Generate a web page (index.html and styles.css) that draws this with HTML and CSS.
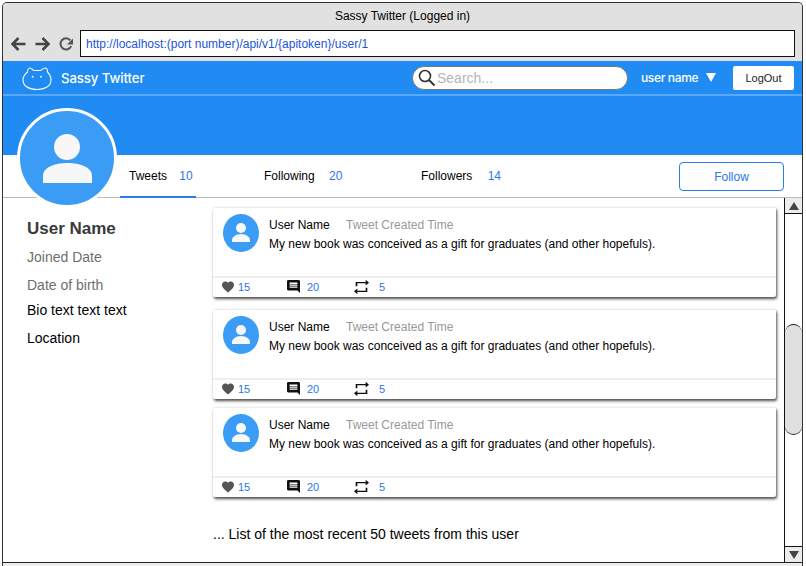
FILE: index.html
```html
<!DOCTYPE html>
<html>
<head>
<meta charset="utf-8">
<meta content="width=device-width, initial-scale=1.0" name="viewport">
<title>Sassy Twitter (Logged in)</title>
<link rel="stylesheet" href="styles.css">
</head>
<body>
<div class="window">
  <div class="chrome">
    <div class="chrome-title">Sassy Twitter (Logged in)</div>
    <div class="chrome-bar">
      <svg class="chrome-icon" width="17" height="16" viewBox="0 0 17 16"><path d="M15.5 8H2.5M8.5 2L2.5 8l6 6" fill="none" stroke="#444" stroke-width="2.6"/></svg>
      <svg class="chrome-icon" width="17" height="16" viewBox="0 0 17 16"><path d="M1.5 8h13M8.5 2l6 6-6 6" fill="none" stroke="#444" stroke-width="2.6"/></svg>
      <svg class="chrome-icon" width="16" height="16" viewBox="0 0 16 16"><path d="M13.2 10.2A5.6 5.6 0 1 1 12.4 4.4" fill="none" stroke="#555" stroke-width="2"/><path d="M15 2.5v6H9z" fill="#555"/></svg>
      <div class="url">http://localhost:(port number)/api/v1/{apitoken}/user/1</div>
    </div>
  </div>

  <div class="nav">
    <svg class="logo" width="30" height="26" viewBox="0 0 30 26"><path d="M5.500 6C5.500 4 6.500 2 8 2C9.500 2 11 4.500 12 4.500h6C19.500 4.500 21 2 23 2C24.500 2 25.500 4 25.500 6C28 8.500 29 11.500 29 14C29 20 23 23.500 15 23.500S1 20 1 14C1 11 3 8 5.500 6z" fill="none" stroke="#fff" stroke-width="1.100"/><circle cx="10.700" cy="10.700" r=".9" fill="#fff"/><circle cx="19" cy="10.700" r=".9" fill="#fff"/></svg>
    <span class="brand">Sassy Twitter</span>
    <div class="search">
      <svg width="18" height="18" viewBox="0 0 18 18"><circle cx="7" cy="7" r="5.500" fill="none" stroke="#333" stroke-width="1.600"/><path d="M11 11l5.500 5.500" stroke="#333" stroke-width="2"/></svg>
      <span>Search...</span>
    </div>
    <span class="user">user name</span>
    <span class="caret"></span>
    <a class="logout">LogOut</a>
  </div>
  <div class="banner"></div>

  <div class="tabs">
    <div class="avatar-big">
      <svg width="94" height="94" viewBox="0 0 94 94"><circle cx="47" cy="36" r="13" fill="#f7f7f7"/><path d="M23 72V65c0-9 12-13 24.500-13S72 56 72 65v7z" fill="#f7f7f7"/></svg>
    </div>
    <a class="tab tab-first tab-on">Tweets <b>10</b></a>
    <a class="tab tab-second">Following <b>20</b></a>
    <a class="tab tab-third">Followers <b>14</b></a>
    <a class="follow">Follow</a>
  </div>

  <div class="main">
    <div class="side">
      <h1>User Name</h1>
      <p class="muted">Joined Date</p>
      <p class="muted dob">Date of birth</p>
      <p class="bio">Bio text text text</p>
      <p class="loc">Location</p>
    </div>

    <div class="feed">
      <div class="tweet">
        <div class="tweet-body">
          <svg class="tweet-pic" width="36" height="38" viewBox="0 0 36 38"><ellipse cx="18" cy="19" rx="18" ry="19" fill="#3b9cf6"/><circle cx="18" cy="14" r="5" fill="#f7f7f7"/><path d="M9 28v-2c0-3 4-6 9-6s9 3 9 6v2z" fill="#f7f7f7"/></svg>
          <div>
            <div class="tweet-head">User Name <span>Tweet Created Time</span></div>
            <div class="tweet-text">My new book was conceived as a gift for graduates (and other hopefuls).</div>
          </div>
        </div>
        <div class="tweet-foot">
          <span class="stat stat-like"><svg width="12" height="12" viewBox="2 2 20 20"><path d="M12 21.350l-1.450-1.320C5.400 15.360 2 12.280 2 8.500 2 5.420 4.420 3 7.500 3c1.740 0 3.410.81 4.500 2.090C13.090 3.810 14.760 3 16.500 3 19.580 3 22 5.420 22 8.500c0 3.780-3.400 6.860-8.550 11.540L12 21.350z" fill="#555"/></svg>15</span>
          <span class="stat stat-reply"><svg width="13" height="13" viewBox="2 2 20 20"><path d="M21.990 4c0-1.100-.89-2-1.990-2H4c-1.100 0-2 .9-2 2v12c0 1.100.9 2 2 2h14l4 4-.01-18zM18 14H6v-2h12v2zm0-3H6V9h12v2zm0-3H6V6h12v2z" fill="#111"/></svg>20</span>
          <span class="stat"><svg width="15" height="16" viewBox="3 1 18 22" preserveAspectRatio="none"><path d="M7 7h10v3l4-4-4-4v3H5v6h2V7zm10 10H7v-3l-4 4 4 4v-3h12v-6h-2v4z" fill="#111"/></svg>5</span>
        </div>
      </div>

      <div class="tweet tweet-tight">
        <div class="tweet-body">
          <svg class="tweet-pic" width="36" height="38" viewBox="0 0 36 38"><ellipse cx="18" cy="19" rx="18" ry="19" fill="#3b9cf6"/><circle cx="18" cy="14" r="5" fill="#f7f7f7"/><path d="M9 28v-2c0-3 4-6 9-6s9 3 9 6v2z" fill="#f7f7f7"/></svg>
          <div>
            <div class="tweet-head">User Name <span>Tweet Created Time</span></div>
            <div class="tweet-text">My new book was conceived as a gift for graduates (and other hopefuls).</div>
          </div>
        </div>
        <div class="tweet-foot">
          <span class="stat stat-like"><svg width="12" height="12" viewBox="2 2 20 20"><path d="M12 21.350l-1.450-1.320C5.400 15.360 2 12.280 2 8.500 2 5.420 4.420 3 7.500 3c1.740 0 3.410.81 4.500 2.090C13.090 3.810 14.760 3 16.500 3 19.580 3 22 5.420 22 8.500c0 3.780-3.400 6.860-8.550 11.540L12 21.350z" fill="#555"/></svg>15</span>
          <span class="stat stat-reply"><svg width="13" height="13" viewBox="2 2 20 20"><path d="M21.990 4c0-1.100-.89-2-1.990-2H4c-1.100 0-2 .9-2 2v12c0 1.100.9 2 2 2h14l4 4-.01-18zM18 14H6v-2h12v2zm0-3H6V9h12v2zm0-3H6V6h12v2z" fill="#111"/></svg>20</span>
          <span class="stat"><svg width="15" height="16" viewBox="3 1 18 22" preserveAspectRatio="none"><path d="M7 7h10v3l4-4-4-4v3H5v6h2V7zm10 10H7v-3l-4 4 4 4v-3h12v-6h-2v4z" fill="#111"/></svg>5</span>
        </div>
      </div>

      <div class="tweet">
        <div class="tweet-body">
          <svg class="tweet-pic" width="36" height="38" viewBox="0 0 36 38"><ellipse cx="18" cy="19" rx="18" ry="19" fill="#3b9cf6"/><circle cx="18" cy="14" r="5" fill="#f7f7f7"/><path d="M9 28v-2c0-3 4-6 9-6s9 3 9 6v2z" fill="#f7f7f7"/></svg>
          <div>
            <div class="tweet-head">User Name <span>Tweet Created Time</span></div>
            <div class="tweet-text">My new book was conceived as a gift for graduates (and other hopefuls).</div>
          </div>
        </div>
        <div class="tweet-foot">
          <span class="stat stat-like"><svg width="12" height="12" viewBox="2 2 20 20"><path d="M12 21.350l-1.450-1.320C5.400 15.360 2 12.280 2 8.500 2 5.420 4.420 3 7.500 3c1.740 0 3.410.81 4.500 2.090C13.090 3.810 14.760 3 16.500 3 19.580 3 22 5.420 22 8.500c0 3.780-3.400 6.860-8.550 11.540L12 21.350z" fill="#555"/></svg>15</span>
          <span class="stat stat-reply"><svg width="13" height="13" viewBox="2 2 20 20"><path d="M21.990 4c0-1.100-.89-2-1.990-2H4c-1.100 0-2 .9-2 2v12c0 1.100.9 2 2 2h14l4 4-.01-18zM18 14H6v-2h12v2zm0-3H6V9h12v2zm0-3H6V6h12v2z" fill="#111"/></svg>20</span>
          <span class="stat"><svg width="15" height="16" viewBox="3 1 18 22" preserveAspectRatio="none"><path d="M7 7h10v3l4-4-4-4v3H5v6h2V7zm10 10H7v-3l-4 4 4 4v-3h12v-6h-2v4z" fill="#111"/></svg>5</span>
        </div>
      </div>

      <p class="more">... List of the most recent 50 tweets from this user</p>
    </div>

    <div class="scroll">
      <div class="scroll-btn"><i class="arrow-up"></i></div>
      <div class="scroll-track"><div class="scroll-thumb"></div></div>
      <div class="scroll-btn scroll-btn-end"><i class="arrow-down"></i></div>
    </div>
  </div>
</div>
</body>
</html>
```

FILE: styles.css
```css
* { box-sizing: border-box; }
html, body { height: 100%; }
body { margin: 0; background: #fff; font-family: "Liberation Sans", Arial, sans-serif; color: #000; overflow: hidden; }
p, h1 { margin: 0; }

.window { width: 801px; height: 564px; margin: 2px 0 0 2px; border: 1px solid #333; border-bottom: none; border-radius: 5px 5px 0 0; display: flex; flex-direction: column; overflow: hidden; background: #ececec; }

/* browser chrome */
.chrome { height: 58px; background: #e1e1e1; flex: none; }
.chrome-title { height: 27px; padding-top: 6px; text-align: center; font-size: 12px; line-height: 15px; }
.chrome-bar { display: flex; align-items: center; padding-left: 7px; height: 27px; }
.chrome-icon { margin-right: 7px; flex: none; }
.url { margin-left: -1px; width: 715px; height: 27px; background: #fff; border: 1px solid #111; font-size: 12px; line-height: 27px; padding-left: 5px; color: #1a55d8; }

/* nav + banner */
.nav { height: 33px; background: #1f8bf3; display: flex; align-items: center; flex: none; color: #fff; padding-left: 19px; }
.logo { flex: none; margin-top: 3px; }
.brand { margin-left: 9px; font-size: 13.2px; font-family: Inter, "Liberation Sans", sans-serif; font-weight: 500; width: 351px; letter-spacing: -.1px; }
.search { width: 216px; height: 24px; border: 1px solid #777; border-radius: 12px; background: #fff; display: flex; align-items: center; padding-left: 5px; font-size: 14px; color: #b5b5b5; }
.search svg { flex: none; margin-right: 1px; }
.user { margin-left: 13px; font-size: 12px; width: 65px; font-family: Inter, "Liberation Sans", sans-serif; font-weight: 500; letter-spacing: -.35px; }
.caret { width: 0; height: 0; border-left: 5px solid transparent; border-right: 5px solid transparent; border-top: 9px solid #fff; }
.logout { margin-left: 17px; width: 61px; height: 24px; background: #fff; border-radius: 2px; color: #222; font-size: 11px; line-height: 24px; text-align: center; }
.banner { height: 61px; background: #1f8bf3; border-top: 2px solid #5aa9f6; flex: none; }

/* tabs */
.tabs { position: relative; height: 43px; background: #fff; border-bottom: 1px solid #bbb; display: flex; flex: none; font-size: 12px; }
.avatar-big { position: absolute; left: 14px; top: -47px; width: 100px; height: 100px; border: 3px solid #fff; border-radius: 50%; background: #3b9cf6; }
.avatar-big svg { display: block; }
.tab { height: 43px; line-height: 43px; padding-left: 9px; }
.tab b { font-weight: normal; color: #2b76e8; margin-left: 11px; }
.tab-first { margin-left: 117px; width: 76px; padding-left: 9px; }
.tab-first b { margin-left: 9px; }
.tab-second { margin-left: 59px; width: 157px; padding-left: 9px; }
.tab-third { width: 267px; padding-left: 9px; }
.tab-third b { margin-left: 12px; }
.tab-on { border-bottom: 2px solid #2b7de9; }
.follow { margin-top: 7px; width: 105px; height: 29px; border: 1px solid #2b7de9; border-radius: 4px; color: #2b76e8; line-height: 29px; text-align: center; }

/* main area */
.main { flex: 1; min-height: 0; height: 364px; background: #fff; display: flex; border-bottom: 1px solid #222; margin-bottom: 3px; }
.side { width: 210px; flex: none; padding: 20px 0 0 24px; font-size: 14px; }
.side h1 { font-size: 17px; line-height: 22px; color: #3a3a3a; }
.muted { color: #6e6e6e; }
.side p { line-height: 16px; }
.side .muted { margin-top: 9px; }
.side .dob { margin-top: 12px; }
.side .bio { margin-top: 9px; }
.side .loc { margin-top: 12px; }

.feed { width: 563px; flex: none; padding-top: 9px; }
.tweet { height: 90px; margin-bottom: 12px; background: #fff; border-top: 1px solid #eee; box-shadow: 1px 2px 3px rgba(0,0,0,.7); border-radius: 2px; display: flex; flex-direction: column; font-size: 12px; }
.tweet-tight { margin-bottom: 8px; }
.tweet-body { flex: 1; display: flex; padding: 6px 0 0 10px; }
.tweet-pic { flex: none; margin-right: 10px; }
.tweet-head { line-height: 14px; margin-top: 4px; }
.tweet-head span { color: #999; margin-left: 13px; }
.tweet-text { line-height: 14px; margin-top: 5px; }
.tweet-foot { height: 21px; border-top: 2px solid #eee; display: flex; align-items: center; padding: 0 0 2px 9px; font-size: 11px; color: #2b76e8; }
.stat { display: flex; align-items: center; gap: 4px; }
.stat-like { width: 65px; }
.stat-reply { width: 67px; gap: 7px; }
.stat:last-child { gap: 10px; }
.more { margin-top: 29px; font-size: 14px; line-height: 16px; }

/* scrollbar */
.scroll { margin-left: 8px; width: 18px; border-left: 1px solid #111; display: flex; flex-direction: column; }
.scroll-btn { height: 16px; border-bottom: 1px solid #111; background: #ececec; display: flex; align-items: center; justify-content: center; flex: none; }
.scroll-btn-end { border-top: 1px solid #111; border-bottom: none; }
.scroll-track { flex: 1; padding-top: 110px; }
.scroll-thumb { height: 111px; background: #e0e0e0; border: 1px solid #222; border-left: none; border-right: none; border-radius: 9px; }
.arrow-up { border-left: 5px solid transparent; border-right: 5px solid transparent; border-bottom: 8px solid #444; }
.arrow-down { border-left: 5px solid transparent; border-right: 5px solid transparent; border-top: 8px solid #444; }
```
